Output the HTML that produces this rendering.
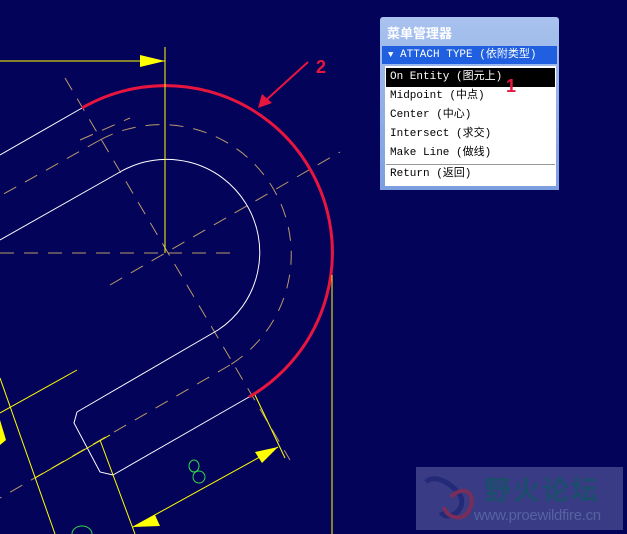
<!DOCTYPE html>
<html><head><meta charset="utf-8"><style>
body{margin:0;width:627px;height:534px;overflow:hidden;background:#04035a;position:relative;font-family:"Liberation Mono","Noto Sans CJK SC",monospace}
svg{position:absolute;left:0;top:0}
.menu{position:absolute;left:380px;top:17px;width:179px;height:173px;background:linear-gradient(#a9c2ee,#7c9ee0);border-radius:3px 3px 0 0}
.title{position:absolute;left:7px;top:6px;color:#fff;font:bold 13px "Noto Sans CJK SC",sans-serif}
.bar{position:absolute;left:2px;top:29px;width:175px;height:18px;background:#1f5fe0;color:#fff;font-size:11px;line-height:18px}
.panel{position:absolute;left:5px;top:49px;width:171px;height:120px;background:#fff}
.row{position:absolute;left:1px;width:169px;height:19px;line-height:19px;font-size:11px;color:#000;padding-left:4px;box-sizing:border-box}
.sel{background:#000;color:#fff}
.logo{position:absolute;left:416px;top:467px;width:207px;height:63px;background:#3a3b85}
</style></head><body>
<svg width="627" height="534" viewBox="0 0 627 534">
<g fill="none">
<g stroke="#b89a6a" stroke-width="1" stroke-dasharray="14,10">
<path d="M100 140 A130 130 0 0 1 230 365"/>
<line x1="100" y1="140" x2="0" y2="196"/>
<line x1="230" y1="365" x2="0" y2="498"/>
<line x1="0" y1="253" x2="240" y2="253"/>
<line x1="110" y1="285" x2="340" y2="152"/>
<line x1="65" y1="78" x2="290" y2="460"/>
<line x1="80" y1="140" x2="130" y2="118"/>
</g>
<g stroke="#fff" stroke-width="1">
<line x1="82" y1="108" x2="0" y2="155"/>
<path d="M0 240 L120 172 A93 93 0 0 1 218 330 L77 412"/>
<line x1="249" y1="397" x2="113" y2="475"/>
<path d="M77 412 L74 423 L100 472 L113 475"/>
</g>
<path d="M82 108 A166 166 0 0 1 249 397" stroke="#e8163f" stroke-width="3"/>
<g stroke="#ffff00" stroke-width="1">
<line x1="165" y1="47" x2="165" y2="253"/>
<line x1="0" y1="61" x2="165" y2="61"/>
<line x1="332" y1="275" x2="332" y2="534"/>
<line x1="133" y1="527" x2="278" y2="447"/>
<line x1="0" y1="413" x2="77" y2="370"/>
<line x1="35" y1="478" x2="110" y2="435"/>
<line x1="0" y1="378" x2="55" y2="534"/>
<line x1="255" y1="395" x2="285" y2="458"/>
<line x1="100" y1="440" x2="135" y2="534"/>
</g>
<g fill="#ffff00">
<polygon points="165,61 140,55 140,67"/>
<polygon points="278,447 255,452 262,463"/>
<polygon points="133,527 155,515 160,526"/>
<polygon points="0,420 6,440 0,445"/>
</g>
<g stroke="#2fd84a" stroke-width="1">
<ellipse cx="194" cy="466" rx="5" ry="6"/><ellipse cx="199" cy="477" rx="6" ry="6"/>
<ellipse cx="82" cy="534" rx="10" ry="8"/>
</g>
<line x1="308" y1="62" x2="264" y2="102" stroke="#e8163f" stroke-width="2"/>
<polygon points="258,108 262,94 272,103" fill="#e8163f"/>
</g>
<text x="316" y="73" fill="#e8163f" font-family="Liberation Sans" font-weight="bold" font-size="18">2</text>
</svg>
<div class="menu">
<div class="title">菜单管理器</div>
<div class="bar"><span style="font-size:9px;margin-left:6px">▼</span> ATTACH TYPE (依附类型)</div>
<div class="panel">
<div class="row sel" style="top:2px">On Entity (图元上)</div>
<div class="row" style="top:21px">Midpoint (中点)</div>
<div class="row" style="top:40px">Center (中心)</div>
<div class="row" style="top:59px">Intersect (求交)</div>
<div class="row" style="top:78px">Make Line (做线)</div>
<div style="position:absolute;left:1px;top:98px;width:169px;height:1px;background:#999"></div>
<div class="row" style="top:99px">Return (返回)</div>
</div>
</div>
<div style="position:absolute;left:506px;top:76px;color:#e8163f;font:bold 18px 'Liberation Sans',sans-serif">1</div>
<div class="logo">
<svg width="70" height="63" viewBox="0 0 70 63"><path d="M10 15 C20 5 40 20 45 30 C50 45 30 55 25 45" stroke="#232a78" stroke-width="5" fill="none"/><path d="M35 30 C50 15 62 30 52 45 C45 55 30 50 28 40" stroke="#7a2d58" stroke-width="4" fill="none"/></svg>
<div style="position:absolute;left:68px;top:2px;color:#1d4d6c;font:bold 27px 'Noto Sans CJK SC',sans-serif;letter-spacing:2px">野火论坛</div>
<div style="position:absolute;left:58px;top:40px;color:#5563a0;font:15px 'Liberation Sans',sans-serif;letter-spacing:-0.3px">www.proewildfire.cn</div>
</div>
</body></html>
